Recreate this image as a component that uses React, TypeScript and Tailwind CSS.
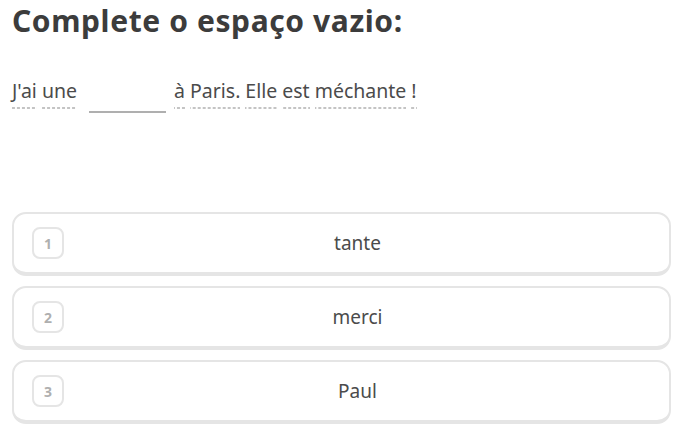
const options = [
  { n: 1, label: "tante" },
  { n: 2, label: "merci" },
  { n: 3, label: "Paul" },
];

function Word({ children }: { children: React.ReactNode }) {
  return (
    <span className="bg-[linear-gradient(to_right,#c4c4c4_60%,transparent_60%)] bg-[length:5px_2px] bg-bottom bg-repeat-x pb-[6px]">
      {children}
    </span>
  );
}

export default function App() {
  return (
    <div
      className="min-h-screen bg-white pl-3 pr-[5px] pt-[1px] text-[#4b4b4b]"
      style={{ fontFamily: '"Noto Sans", "Open Sans", sans-serif' }}
    >
      <h1 className="text-[30px] font-bold leading-[40px] tracking-[0.6px] text-[#3c3c3c]">
        Complete o espaço vazio:
      </h1>

      <div className="mt-[38px] flex items-start text-[19.5px] leading-[24px]">
        <span className="flex gap-[5px]">
          <Word>J'ai</Word>
          <Word>une</Word>
        </span>
        <span className="ml-[12px] mr-[8px] mt-[8px] h-[26px] w-[77px] border-b-2 border-[#afafaf]" />
        <span className="flex gap-[5px]">
          <Word>à</Word>
          <Word>Paris.</Word>
          <Word>Elle</Word>
          <Word>est</Word>
          <Word>méchante</Word>
          <Word>!</Word>
        </span>
      </div>

      <div className="mt-[99px] flex flex-col gap-[10px]">
        {options.map((o) => (
          <div
            key={o.n}
            className="flex h-[64px] items-center rounded-[14px] border-2 border-b-4 border-[#e5e5e5] px-[18px]"
          >
            <span className="flex h-[32px] w-[32px] items-center justify-center rounded-[8px] border-2 border-[#e5e5e5] text-[14px] font-bold text-[#afafaf]">
              {o.n}
            </span>
            <span className="flex-1 text-center text-[19px]">{o.label}</span>
          </div>
        ))}
      </div>
    </div>
  );
}
